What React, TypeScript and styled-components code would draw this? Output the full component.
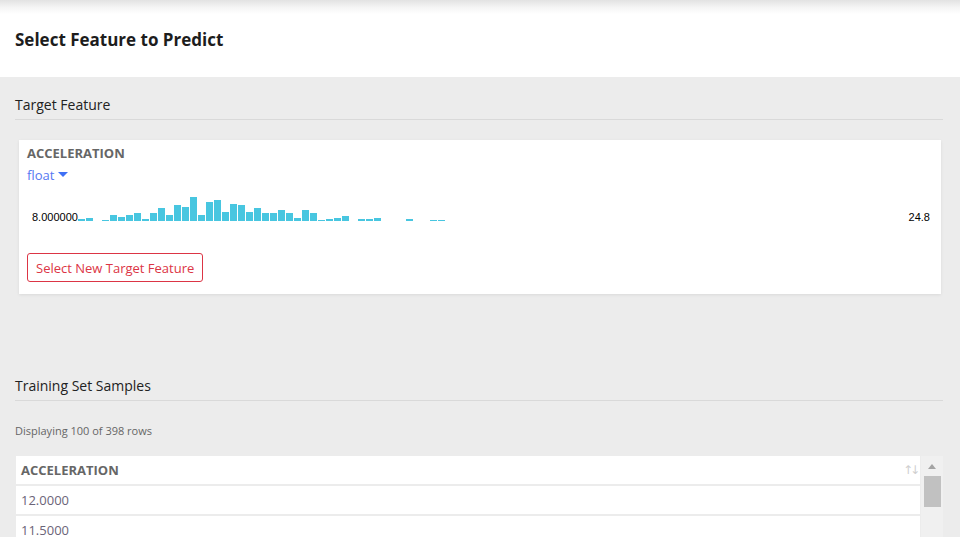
import styled, { createGlobalStyle } from "styled-components";

const GlobalStyle = createGlobalStyle`
    html, body {
        margin: 0;
        padding: 0;
        background: #ececec;
        font-family: "Open Sans", "Noto Sans", Arial, sans-serif;
        overflow: hidden;
    }
`

// bar heights in px, read off the target histogram
const bins = [2, 3, 0, 1, 6, 4, 6, 8, 2, 8, 13, 6, 16, 14, 24, 6, 19, 21, 9, 17, 16, 9, 13, 8, 8, 11, 8, 3, 11, 8, 1, 2, 3, 5, 0, 2, 2, 3, 0, 0, 0, 2, 0, 0, 1, 1];

const rows = ["12.0000", "11.5000", "11.0000", "12.0000"];

export default function App() {
    return (
        <Page>
            <GlobalStyle/>
            <TopBar>
                <PageTitle>Select Feature to Predict</PageTitle>
            </TopBar>
            <Body>
                <SectionTitle>Target Feature</SectionTitle>
                <Card>
                    <FeatureName>ACCELERATION</FeatureName>
                    <TypeToggle>
                        float
                        <Caret/>
                    </TypeToggle>
                    <HistRow>
                        <AxisLabel>8.000000</AxisLabel>
                        <Bars>
                            {bins.map((h, i) => (
                                <Bar key={i} style={{height: h}}/>
                            ))}
                        </Bars>
                        <AxisLabel>24.8</AxisLabel>
                    </HistRow>
                    <DangerButton>Select New Target Feature</DangerButton>
                </Card>

                <SectionTitle $top={82}>Training Set Samples</SectionTitle>
                <RowCount>Displaying 100 of 398 rows</RowCount>
                <TableWrap>
                    <Table>
                        <HeadCell>
                            ACCELERATION
                            <SortIcon>↑↓</SortIcon>
                        </HeadCell>
                        {rows.map((r, i) => (
                            <Cell key={i}>{r}</Cell>
                        ))}
                    </Table>
                    <Scrollbar>
                        <ScrollArrow/>
                        <ScrollThumb/>
                    </Scrollbar>
                </TableWrap>
            </Body>
        </Page>
    )
}

const Page = styled.div`
    width: 960px;
    height: 537px;
    overflow: hidden;
    background: #ececec;
`

const TopBar = styled.div`
    height: 77px;
    display: flex;
    align-items: center;
    padding: 0 15px;
    background: linear-gradient(to bottom, #e2e2e2 0px, #f6f6f6 8px, #ffffff 14px);
`

const PageTitle = styled.h1`
    margin: 0 0 -2px 0;
    font-size: 17px;
    font-weight: 700;
    color: #1d1d1d;
`

const Body = styled.div`
    padding: 0 17px 0 15px;
`

const SectionTitle = styled.div<{ $top?: number }>`
    margin-top: ${p => p.$top ?? 18}px;
    padding-bottom: 4px;
    border-bottom: 1px solid #d9d9d9;
    font-size: 14px;
    color: #222;
    line-height: 20px;
`

const Card = styled.div`
    margin: 20px 2px 0 4px;
    height: 154px;
    box-sizing: border-box;
    padding: 4px 8px;
    background: #fff;
    box-shadow: 0 1px 3px rgba(0, 0, 0, 0.08);
    display: flex;
    flex-direction: column;
    align-items: flex-start;
`

const FeatureName = styled.div`
    font-size: 13px;
    font-weight: 700;
    color: #666;
    line-height: 18px;
`

const TypeToggle = styled.div`
    margin-top: 4px;
    display: flex;
    align-items: center;
    gap: 4px;
    font-size: 13px;
    color: #5577f2;
    line-height: 18px;
    cursor: pointer;
`

const Caret = styled.span`
    width: 0;
    height: 0;
    border-left: 5px solid transparent;
    border-right: 5px solid transparent;
    border-top: 5px solid #3f70f5;
    margin-top: -2px;
`

const HistRow = styled.div`
    margin-top: 9px;
    align-self: stretch;
    display: flex;
    align-items: flex-end;
    height: 28px;
    padding-left: 5px;
    padding-right: 3px;
`

const AxisLabel = styled.span`
    font-family: "Liberation Sans", Arial, sans-serif;
    font-size: 11px;
    color: #000;
    line-height: 11px;
    margin-bottom: -2px;
`

const Bars = styled.div`
    flex: 1;
    display: flex;
    align-items: flex-end;
    gap: 1px;
    height: 100%;
`

const Bar = styled.div`
    width: 7px;
    background: #48c6e0;
`

const DangerButton = styled.button`
    margin-top: 32px;
    height: 29px;
    padding: 0 8px;
    font-family: inherit;
    font-size: 13px;
    color: #dc3545;
    background: #fff;
    border: 1px solid #dc3545;
    border-radius: 3px;
    cursor: pointer;
`

const RowCount = styled.div`
    margin-top: 22px;
    font-size: 11px;
    color: #666;
`

const TableWrap = styled.div`
    margin-top: 18px;
    margin-left: 1px;
    display: flex;
`

const Table = styled.div`
    width: 906px;
    display: flex;
    flex-direction: column;
    gap: 2px;
`

const HeadCell = styled.div`
    height: 28px;
    display: flex;
    align-items: center;
    justify-content: space-between;
    padding: 0 3px 0 5px;
    background: #fff;
    font-size: 13px;
    font-weight: 700;
    color: #666;
`

const SortIcon = styled.span`
    font-family: "DejaVu Sans", sans-serif;
    font-size: 12px;
    font-weight: 400;
    color: #cfcfcf;
    letter-spacing: -3px;
`

const Cell = styled.div`
    height: 28px;
    display: flex;
    align-items: center;
    padding: 0 5px;
    background: #fff;
    font-size: 13px;
    color: #6b6478;
`

const Scrollbar = styled.div`
    width: 22px;
    margin-left: 1px;
    background: #f0f0f0;
    display: flex;
    flex-direction: column;
    align-items: center;
    padding-top: 8px;
`

const ScrollArrow = styled.div`
    width: 0;
    height: 0;
    border-left: 4px solid transparent;
    border-right: 4px solid transparent;
    border-bottom: 5px solid #a3a3a3;
`

const ScrollThumb = styled.div`
    margin-top: 7px;
    width: 17px;
    height: 31px;
    background: #c1c1c1;
`
